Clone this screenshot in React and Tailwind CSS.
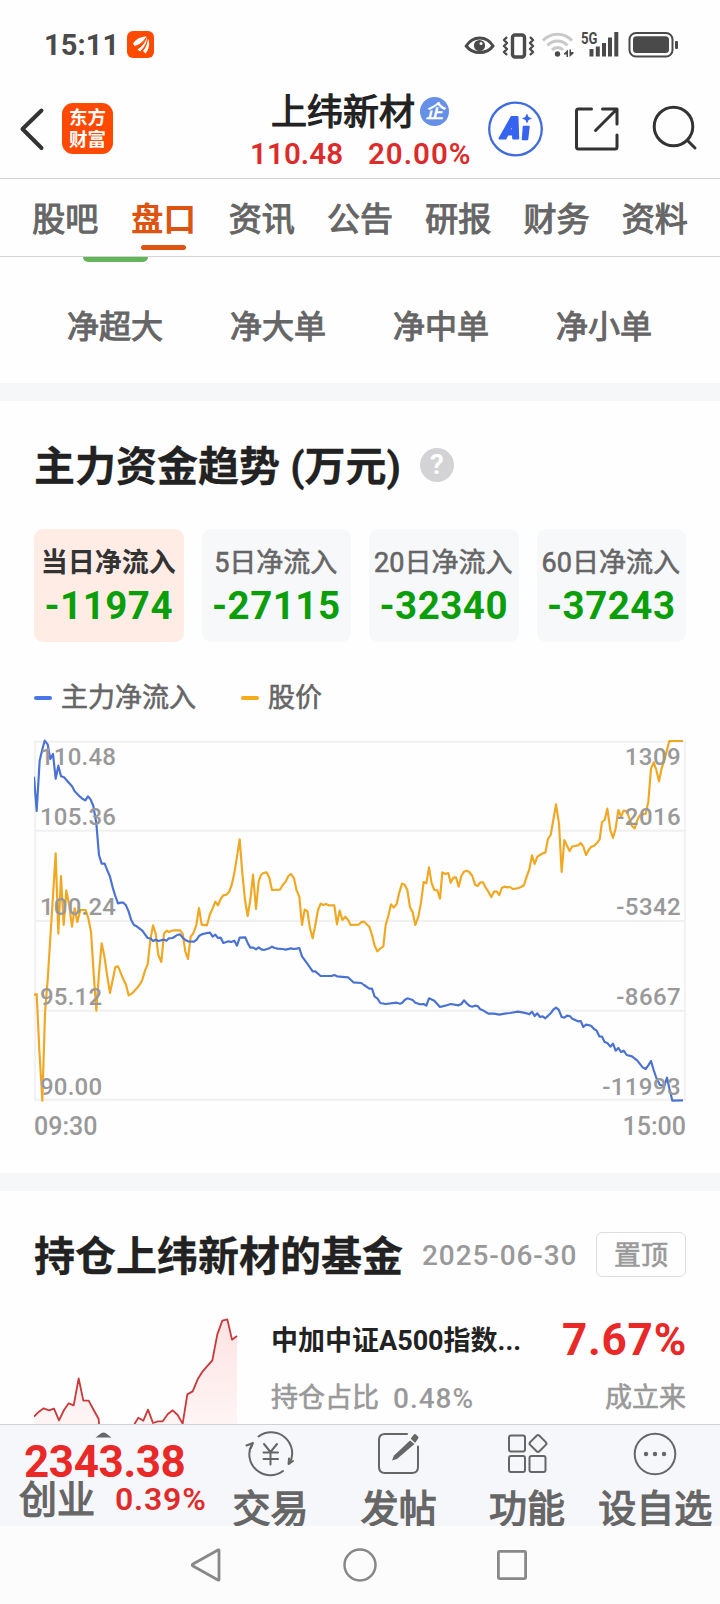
import React from "react";

const TABS = ["股吧", "盘口", "资讯", "公告", "研报", "财务", "资料"];
const ORDER_SIZES = ["净超大", "净大单", "净中单", "净小单"];
const PERIODS = [
  { label: "当日净流入", value: "-11974", active: true },
  { label: "5日净流入", value: "-27115" },
  { label: "20日净流入", value: "-32340" },
  { label: "60日净流入", value: "-37243" },
];
const PRICE_AXIS = ["110.48", "105.36", "100.24", "95.12", "90.00"];
const FLOW_AXIS = ["1309", "-2016", "-5342", "-8667", "-11993"];

const GRID = [65, 332, 603, 872, 1139];

const PRICE =
  "42,825 50,822 58,990 67,1142 75,880 83,780 107,400 115,641 123,468 131,615 139,511 148,560 156,620 164,565 172,606 181,570 197,570 205,595 213,635 221,760 229,872 237,760 245,670 253,708 262,770 270,819 278,780 286,742 294,739 302,758 310,778 318,794 326,826 334,822 343,813 351,804 359,794 367,779 375,752 383,733 391,660 399,616 407,640 415,705 424,726 432,641 440,632 446,636 460,631 480,631 488,641 496,695 504,717 512,650 520,640 529,615 537,564 545,614 561,616 569,585 578,565 586,545 594,556 602,537 610,526 619,524 627,516 635,495 643,460 651,410 659,358 667,460 675,540 683,588 691,540 699,464 708,567 716,484 723,465 730,459 740,457 748,473 756,510 780,509 788,495 797,485 805,468 813,462 822,475 830,512 838,530 846,615 854,569 862,573 870,625 878,655 886,615 894,570 902,551 910,555 918,552 926,556 943,556 951,613 959,572 967,600 976,590 984,599 992,615 1016,614 1024,606 1032,605 1048,620 1056,645 1064,677 1072,694 1080,686 1090,679 1097,615 1105,588 1113,553 1121,563 1130,552 1138,517 1146,491 1154,494 1162,510 1170,562 1178,577 1186,615 1195,590 1203,548 1211,486 1219,490 1227,442 1235,490 1243,510 1252,511 1260,536 1267,457 1276,462 1285,459 1292,488 1300,473 1308,472 1316,500 1324,468 1332,455 1340,452 1348,456 1357,468 1365,494 1373,498 1381,487 1389,487 1397,503 1405,515 1414,531 1422,515 1430,514 1438,525 1446,503 1453,500 1462,502 1470,501 1478,507 1487,506 1495,504 1503,501 1512,495 1520,470 1528,448 1536,406 1544,432 1552,410 1560,405 1568,400 1576,398 1584,357 1592,345 1600,300 1608,253 1617,310 1625,456 1633,360 1641,377 1649,393 1657,379 1665,378 1674,376 1682,369 1690,380 1698,405 1706,390 1714,380 1722,378 1730,370 1739,358 1746,306 1754,300 1762,266 1771,330 1779,354 1787,325 1795,270 1803,290 1811,272 1820,273 1828,295 1836,318 1844,325 1852,300 1860,285 1877,281 1885,245 1893,145 1901,127 1909,150 1917,184 1925,145 1933,120 1941,90 1948,63 1989,63";

const FLOW =
  "42,170 50,273 59,122 66,92 74,62 83,73 91,117 99,102 107,176 115,137 123,169 132,172 140,181 148,190 156,199 164,214 172,222 180,230 188,237 196,241 204,229 212,239 220,258 229,310 237,405 245,431 254,431 262,451 270,470 278,502 286,528 294,550 302,548 310,548 318,556 326,575 334,601 342,615 350,619 359,626 367,632 375,643 383,654 391,655 399,663 407,659 415,663 432,659 440,662 446,655 458,654 470,646 480,643 488,653 496,660 504,664 522,665 530,659 537,648 545,643 561,639 570,638 578,650 586,644 594,654 602,653 610,669 626,664 634,666 643,662 651,677 659,653 676,652 684,671 691,683 700,683 708,688 716,682 724,688 732,690 748,685 756,680 764,684 773,686 788,687 797,689 813,685 821,687 830,686 838,684 846,709 862,731 878,754 886,754 902,768 935,768 943,765 951,769 984,772 1000,787 1024,789 1032,795 1048,806 1056,806 1064,830 1072,835 1081,849 1097,852 1130,848 1140,851 1146,849 1154,840 1162,835 1178,840 1186,848 1200,853 1211,852 1219,857 1227,835 1243,842 1260,861 1276,857 1292,852 1316,856 1324,852 1332,841 1340,850 1348,857 1357,860 1365,857 1373,858 1381,868 1389,871 1405,881 1422,881 1438,884 1454,881 1470,879 1494,875 1511,878 1520,880 1528,883 1536,875 1544,888 1552,880 1560,891 1568,889 1576,895 1592,880 1600,869 1608,863 1616,869 1625,891 1633,893 1641,887 1649,888 1657,896 1674,904 1682,903 1690,921 1698,914 1706,915 1714,918 1722,927 1730,932 1738,949 1746,950 1754,966 1762,969 1771,980 1779,971 1787,992 1795,984 1803,996 1811,992 1820,1005 1836,1009 1852,1022 1868,1042 1877,1047 1885,1036 1893,1023 1901,1050 1909,1074 1920,1095 1933,1098 1941,1073 1948,1105 1957,1142 1989,1141";

const FUND =
  "102,650 117,635 131,625 147,631 162,626 177,661 192,630 206,610 221,616 236,535 250,602 266,602 281,630 296,657 299,700 395,700 404,671 415,653 430,662 444,629 459,669 474,664 488,664 503,643 518,631 533,645 548,671 562,583 578,574 593,538 608,514 623,497 637,481 652,403 667,362 682,358 696,419 711,408";

function StatusBar() {
  return (
    <div className="flex h-[84px] shrink-0 items-center justify-between pt-[5px] pr-[41px] pl-[44px]">
      <div className="flex items-center gap-[9px]">
        <span className="w-[74px] pt-[1px] text-[29px] leading-none font-bold tracking-[0.1px] text-[#4a4a4a]">15:11</span>
        <svg width="27" height="27" viewBox="0 0 27 27">
          <rect width="27" height="27" rx="6" fill="#ff4a00" />
          <path d="M6 12.500C9 8 14 5.500 19.500 5.500C17 11 13 14 7.500 15Z" fill="#fff" />
          <path d="M10.500 18.500C15 16 18 12 20 6C21.500 11 17.500 17 13 20.500Z" fill="#fff" />
          <path d="M16 20C19 16.500 20.800 12 20.800 7.500C23.500 12 22 18.500 18.500 22.500Z" fill="#fff" />
          <path d="M8 15.500C12 14.500 16 11 19.300 6.500M14 20C18 16 20 12 20.500 7" stroke="#ff4a00" strokeWidth="0.9" fill="none" />
        </svg>
      </div>
      <svg className="overflow-visible" width="215" height="30" viewBox="0 0 215 30" fill="none">
        <path d="M2.200 16C9 5.300 22.500 5.300 29 16C22.500 24.800 9 24.800 2.200 16Z" stroke="#4a4a4a" strokeWidth="3" />
        <circle cx="15.500" cy="15.500" r="5.600" fill="#4a4a4a" />
        <circle cx="17" cy="13.500" r="1.500" fill="#fefefe" />
        <rect x="48.500" y="5" width="12" height="22" rx="2.500" stroke="#4a4a4a" strokeWidth="3.400" />
        <path d="M43 7L40 10L43 13L40 16L43 19L40 22L43 25M66 7L69 10L66 13L69 16L66 19L69 22L66 25" stroke="#4a4a4a" strokeWidth="2.400" strokeLinejoin="round" />
        <path d="M79 10.500C87 2 100 2 108 10.500" stroke="#c9c9c9" strokeWidth="3" />
        <path d="M83.500 15.500C89 9.500 98 9.500 103.500 15.500" stroke="#c9c9c9" strokeWidth="3" />
        <path d="M88 20C91 16.600 96 16.600 99 20" stroke="#c9c9c9" strokeWidth="3" />
        <circle cx="93.500" cy="24" r="2.700" fill="#4a4a4a" />
        <path d="M100 23.500L104 19.500V27H102.500V24.500H100ZM105.500 19.500V27L109.500 23.500V22H107V19.500Z" fill="#4a4a4a" />
        <text x="117" y="13.500" fontSize="16" fontWeight="700" fill="#4a4a4a" textLength="16.500" lengthAdjust="spacingAndGlyphs">5G</text>
        <path d="M127.500 19V26.500M133.800 16.500V26.500M140 13V26.500M146 7.500V26.500M152.300 2V26.500" stroke="#4a4a4a" strokeWidth="4" />
        <rect x="165.500" y="3" width="43" height="23.500" rx="6.500" stroke="#4a4a4a" strokeWidth="2" />
        <rect x="169" y="6.300" width="36" height="16.800" rx="3.500" fill="#4a4a4a" />
        <rect x="211" y="11" width="3" height="8" rx="1" fill="#4a4a4a" />
      </svg>
    </div>
  );
}

function Header() {
  return (
    <div className="flex h-[95px] shrink-0 border-b border-[#d3d3d3]">
      <div className="flex w-[240px] shrink-0 items-center gap-[16px] pb-[5px] pl-[18px]">
        <svg width="28" height="44" viewBox="0 0 28 44" fill="none">
          <path d="M23.500 3.500L4.500 22L23.500 41" stroke="#333" strokeWidth="4" strokeLinecap="round" strokeLinejoin="round" />
        </svg>
        <div className="flex h-[51px] w-[51px] flex-col items-center justify-center rounded-[11px] bg-[#ff4800] text-[18.5px] leading-[22px] font-bold text-white">
          <span>东方</span>
          <span>财富</span>
        </div>
      </div>
      <div className="flex w-[240px] shrink-0 flex-col pl-[10px]">
        <div className="flex h-[54px] items-center gap-[5px] pl-[21px]">
          <span className="pt-[3px] text-[36px] leading-none whitespace-nowrap text-[#222] [-webkit-text-stroke:1.2px]">上纬新材</span>
          <span className="flex h-[29px] w-[29px] items-center justify-center rounded-full bg-[#6690e8] text-[19px] leading-none font-bold text-white italic">企</span>
        </div>
        <div className="flex h-[34px] items-center gap-[25px] text-[29.5px] leading-none font-semibold text-[#dc2b2b]">
          <span className="w-[93px] tracking-[0.1px]">110.48</span>
          <span className="tracking-[1px]">20.00%</span>
        </div>
      </div>
      <div className="flex flex-1 items-center pb-[5px] pl-[7px]">
        <svg width="56" height="56" viewBox="0 0 56 56" fill="none">
          <circle cx="28.500" cy="28" r="26.300" stroke="#3f6bdc" strokeWidth="2.300" />
          <path d="M24.500 16H30.500L31.200 37.500H26.200L26 33.500H20.500L18.500 37.500H12.500ZM25.300 22L22.300 29.200H25.800Z" fill="#3663f0" stroke="#3663f0" strokeWidth="2" strokeLinejoin="round" fillRule="evenodd" />
          <path d="M36.500 25.500H42L40.500 38.500H35.500Z" fill="#3663f0" stroke="#3663f0" strokeWidth="1.500" strokeLinejoin="round" />
          <path d="M40 12.500L41.600 15.900L45 17.500L41.600 19.100L40 22.500L38.400 19.100L35 17.500L38.400 15.900Z" fill="#3663f0" />
        </svg>
        <svg className="ml-[31px]" width="46" height="46" viewBox="0 0 46 46" fill="none" stroke="#333" strokeWidth="3" strokeLinecap="round" strokeLinejoin="round">
          <path d="M17.500 3H4.500Q2.500 3 2.500 5V41Q2.500 43 4.500 43H41Q43 43 43 41V29" />
          <path d="M28.500 3H43V18M42.500 3.500L21.500 24.500" />
        </svg>
        <svg className="ml-[32px]" width="48" height="48" viewBox="0 0 48 48" fill="none" stroke="#333" strokeWidth="3" strokeLinecap="round">
          <circle cx="21.500" cy="21.500" r="19.300" />
          <path d="M36 36L43 43" />
        </svg>
      </div>
    </div>
  );
}

function Tabs() {
  return (
    <div className="flex h-[78px] shrink-0 border-b border-[#d3d3d3] px-4">
      {TABS.map((t) => (
        <div key={t} className="flex flex-1 flex-col items-center">
          <span className={t === "盘口" ? "h-[66px] pt-[5px] text-[32.5px] leading-[72px] font-bold text-[#dd5410]" : "h-[66px] pt-[5px] text-[33px] leading-[72px] text-[#666] [-webkit-text-stroke:1.1px]"}>{t}</span>
          {t === "盘口" && <span className="h-[5px] w-[45px] rounded-full bg-[#dd5410]" />}
        </div>
      ))}
    </div>
  );
}

function FlowChart() {
  return (
    <div className="relative mt-[17px] h-[371px] text-[24px] leading-none font-medium text-[#999]">
      <svg className="block" width="652" height="370" viewBox="42 45 1956 1110" fill="none">
        {GRID.map((y) => (
          <path key={y} d={`M42 ${y}H1998`} stroke="#f0f0f0" strokeWidth="6" />
        ))}
        <path d="M45 65V1139M1995 65V1139" stroke="#f0f0f0" strokeWidth="5" />
        <polyline points={PRICE} stroke="#f0a823" strokeWidth="6.500" strokeLinejoin="round" />
        <polyline points={FLOW} stroke="#4a72d2" strokeWidth="6.500" strokeLinejoin="round" />
      </svg>
      <div className="absolute inset-x-[6px] top-[10px] flex justify-between">
        {[PRICE_AXIS, FLOW_AXIS].map((axis, i) => (
          <div key={i} className={i ? "-mr-[1px] flex flex-col text-right tracking-[0.4px]" : "flex flex-col tracking-[0.2px]"}>
            {axis.map((v, j) => (
              <span key={v} className={j === 0 ? "h-[60px] shrink-0" : j === 4 ? "h-[24px] shrink-0" : "h-[90px] shrink-0"}>{v}</span>
            ))}
          </div>
        ))}
      </div>
    </div>
  );
}

function Trend() {
  return (
    <section className="flex h-[772px] shrink-0 flex-col px-[34px]">
      <div className="flex h-[128px] items-center gap-[19px]">
        <h2 className="pt-[4px] text-[41px] leading-none font-bold whitespace-nowrap text-[#222] [-webkit-text-stroke:0.3px]">
          主力资金趋势 (万元)
        </h2>
        <span className="flex h-[34px] w-[34px] items-center justify-center rounded-full bg-[#d3d3d5] text-[28px] leading-none font-semibold text-white">?</span>
      </div>
      <div className="grid h-[113px] grid-cols-4 gap-[18px]">
        {PERIODS.map((p) => (
          <div key={p.label} className={p.active ? "flex flex-col items-center rounded-[9px] bg-[#ffede5] pt-[17px]" : "flex flex-col items-center rounded-[9px] bg-[#f7f8fa] pt-[17px]"}>
            <span className={p.active ? "-ml-[1px] text-[27px] leading-[34px] font-bold whitespace-nowrap text-[#333]" : "-ml-[1px] text-[27px] leading-[34px] whitespace-nowrap text-[#666] [-webkit-text-stroke:0.6px]"}>{p.label}</span>
            <span className="mt-[4px] text-[38.5px] leading-[44px] font-bold tracking-[0.5px] text-[#0a9f0a]">{p.value}</span>
          </div>
        ))}
      </div>
      <div className="mt-[36px] flex h-[40px] items-center text-[27px] leading-none text-[#666]">
        <span className="mr-[9px] h-1 w-[18px] rounded-full bg-[#4a76e8]" />
        <span className="[-webkit-text-stroke:0.6px]">主力净流入</span>
        <span className="mr-[9px] ml-[45px] h-1 w-[18px] rounded-full bg-[#f5ab1a]" />
        <span className="[-webkit-text-stroke:0.6px]">股价</span>
      </div>
      <FlowChart />
      <div className="mt-[6px] flex justify-between text-[25px] leading-[30px] font-medium text-[#999]">
        <span>09:30</span>
        <span>15:00</span>
      </div>
    </section>
  );
}

function Funds() {
  return (
    <section className="flex h-[233px] shrink-0 flex-col overflow-hidden px-[34px]">
      <div className="flex h-[125px] shrink-0 items-center pt-[2px]">
        <h2 className="pt-[5px] text-[41px] leading-none font-bold whitespace-nowrap text-[#222] [-webkit-text-stroke:0.3px]">持仓上纬新材的基金</h2>
        <span className="ml-[19px] pt-[2px] text-[28px] leading-none font-medium tracking-[0.9px] whitespace-nowrap text-[#999]">2025-06-30</span>
        <span className="ml-auto flex h-[45px] w-[90px] items-center justify-center rounded-[6px] border border-[#dedede] pt-[3px] text-[27px] leading-none text-[#999] [-webkit-text-stroke:0.6px]">置顶</span>
      </div>
      <div className="flex h-[108px] shrink-0">
        <svg className="shrink-0" width="204" height="108" viewBox="102 348 612 324">
          <defs>
            <linearGradient id="fundFill" x1="0" y1="0" x2="0" y2="1">
              <stop offset="0" stopColor="#fde3e3" />
              <stop offset="1" stopColor="#fff6f6" />
            </linearGradient>
          </defs>
          <polygon points={`102,700 ${FUND} 711,700`} fill="url(#fundFill)" />
          <polyline points={FUND} fill="none" stroke="#c93a3a" strokeWidth="5.500" strokeLinejoin="round" />
        </svg>
        <div className="ml-[33px] flex flex-1 flex-col">
          <div className="flex h-[53px] items-center justify-between">
            <span className="pt-[2px] text-[27px] leading-none font-bold whitespace-nowrap text-[#222]">中加中证A500指数...</span>
            <span className="-mr-[1px] text-[44px] leading-none font-bold tracking-[0.8px] text-[#e92828]">7.67%</span>
          </div>
          <div className="flex h-[64px] items-center justify-between pt-[9px] text-[27px] leading-none text-[#999]">
            <span className="flex items-center gap-[14px]">
              <span className="[-webkit-text-stroke:0.6px]">持仓占比</span>
              <span className="text-[28px] font-medium tracking-[1px]">0.48%</span>
            </span>
            <span className="[-webkit-text-stroke:0.6px]">成立来</span>
          </div>
        </div>
      </div>
    </section>
  );
}

function Action({ label, children }) {
  return (
    <div className="flex flex-1 flex-col items-center">
      <svg className="mt-[5px] shrink-0" width="50" height="48" viewBox="0 0 50 48" fill="none" stroke="#666" strokeWidth="2" strokeLinecap="round" strokeLinejoin="round">
        {children}
      </svg>
      <span className="mt-[8px] ml-[1px] text-[38px] leading-[46px] whitespace-nowrap text-[#666] [-webkit-text-stroke:1.3px]">{label}</span>
    </div>
  );
}

function BottomBar() {
  return (
    <div className="flex h-[102px] shrink-0 overflow-hidden border-t border-[#d0d1d6] bg-[#f6f7fa]">
      <div className="flex w-[206px] shrink-0 flex-col">
        <svg className="mt-[7px] ml-[95px] shrink-0" width="17" height="6" viewBox="0 0 17 6">
          <path d="M0.500 5.500L6.500 1Q8.500 0 10.500 1L16.500 5.500Z" fill="#666" />
        </svg>
        <span className="ml-[24px] text-[44px] leading-[48px] font-bold tracking-[-0.4px] text-[#e92828]">2343.38</span>
        <div className="flex h-[28px] items-center pl-[19px] leading-none whitespace-nowrap">
          <span className="shrink-0 text-[38px] text-[#666] [-webkit-text-stroke:1.3px]">创业</span>
          <span className="ml-[20px] shrink-0 pb-[3px] text-[32px] font-semibold tracking-[0.8px] text-[#e02b2b]">0.39%</span>
        </div>
      </div>
      <div className="flex w-[513px]">
        <Action label="交易">
          <path d="M13.500 6.500A21 21 0 0 1 44.500 33.500M38 41A21 21 0 0 1 7 14" />
          <path d="M1.500 15.500L8 13L6 18M48 31L43.500 34L44 28.500" />
          <path d="M19 14L25.500 22L32 14M25.500 22V34.500M18.500 22.500H33M18.500 29H33" />
        </Action>
        <Action label="发帖">
          <path d="M34 4H12Q6 4 6 10V37Q6 43 12 43H39Q45 43 45 37V16.500" />
          <path d="M37 10.500L41.500 14L24 29L19 30.500L21 25.500Z" fill="#666" stroke="none" />
          <path d="M39 8.500L42 5L44.500 7.500L42 11.500Z" fill="#666" />
        </Action>
        <Action label="功能">
          <rect x="7" y="5.500" width="16" height="16" rx="2" />
          <rect x="7" y="26" width="16" height="16" rx="2" />
          <rect x="27.500" y="26" width="16" height="16" rx="2" />
          <rect x="29.500" y="7" width="13" height="13" rx="2" transform="rotate(45 36 13.500)" />
        </Action>
        <Action label="设自选">
          <circle cx="25" cy="24" r="20.300" />
          <g fill="#666" stroke="none">
            <circle cx="16" cy="24" r="2.200" />
            <circle cx="25" cy="24" r="2.200" />
            <circle cx="34" cy="24" r="2.200" />
          </g>
        </Action>
      </div>
    </div>
  );
}

function NavBar() {
  return (
    <div className="flex h-[78px] shrink-0 items-center gap-[118px] bg-[#fcfcfc] pl-[188px]">
      <svg width="36" height="36" viewBox="0 0 36 36" fill="none" stroke="#888" strokeWidth="2.800" strokeLinejoin="round">
        <path d="M31 3.500V32.500Q31 33.500 30 33L5 19Q3.500 18 5 17L30 3Q31 2.500 31 3.500Z" />
      </svg>
      <svg width="36" height="36" viewBox="0 0 36 36" fill="none" stroke="#888" strokeWidth="2.500">
        <circle cx="18" cy="18" r="15.500" />
      </svg>
      <svg className="-ml-[2px]" width="36" height="36" viewBox="0 0 36 36" fill="none" stroke="#888" strokeWidth="2.800">
        <rect x="4.400" y="4.400" width="27.200" height="27.200" rx="1.500" />
      </svg>
    </div>
  );
}

export default function App() {
  return (
    <div className="flex h-[1604px] w-[720px] flex-col overflow-hidden bg-[#fefefe] font-[Roboto,'Noto_Sans_CJK_SC',sans-serif]">
      <StatusBar />
      <Header />
      <Tabs />
      <section className="flex h-[126px] shrink-0 flex-col">
        <div className="ml-[83px] h-[5px] w-[65px] rounded-b-[8px] bg-[#64b559]" />
        <div className="grid grid-cols-4 px-[34px] pt-[44px] text-center text-[32px] leading-[42px] text-[#666] [-webkit-text-stroke:1.1px]">
          {ORDER_SIZES.map((s) => (
            <span key={s} className="-ml-[1px]">{s}</span>
          ))}
        </div>
      </section>
      <div className="h-[18px] shrink-0 bg-[#f6f7f9]" />
      <Trend />
      <div className="h-[18px] shrink-0 bg-[#f6f7f9]" />
      <Funds />
      <BottomBar />
      <NavBar />
    </div>
  );
}
